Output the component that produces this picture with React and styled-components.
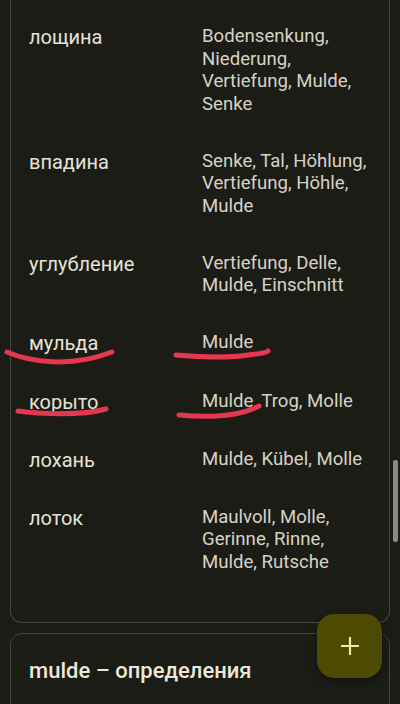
import styled, { createGlobalStyle } from "styled-components"

const GlobalStyle = createGlobalStyle`
  html, body {
    margin: 0;
    padding: 0;
    background: #1c1c17;
  }
  body {
    font-family: Roboto, "Noto Sans", sans-serif;
  }
`

const Screen = styled.div`
  position: relative;
  width: 400px;
  height: 704px;
  overflow: hidden;
  background: #1c1c17;
  padding: 0 10px;
  box-sizing: border-box;
`

const TranslationsCard = styled.div`
  border: 1px solid #46463a;
  border-top: none;
  border-radius: 0 0 12px 12px;
  padding: 8px 0 31px;
`

const Row = styled.div`
  display: grid;
  grid-template-columns: 173px 1fr;
  padding: 17.4px 0 17.4px 18px;
  align-items: start;
`

const Word = styled.div`
  color: #e6e3d6;
  font-size: 20px;
  line-height: 22.4px;
  padding-top: 1px;
`

const Synonyms = styled.div`
  color: #d6d3c4;
  font-size: 18.6px;
  line-height: 22.4px;
  padding-right: 8px;
`

const DefinitionsCard = styled.div`
  margin-top: 10px;
  border: 1px solid #46463a;
  border-radius: 12px;
  height: 120px;
  padding: 24px 18px;
  box-sizing: border-box;
`

const DefinitionsTitle = styled.div`
  color: #ebe8da;
  font-size: 22px;
  font-weight: 500;
`

const Fab = styled.button`
  position: absolute;
  right: 18px;
  top: 614px;
  width: 65px;
  height: 64px;
  border: none;
  border-radius: 17px;
  background: #4c4a03;
  box-shadow: 0 3px 6px rgba(0, 0, 0, 0.45);
  display: flex;
  align-items: center;
  justify-content: center;
  padding: 0;
`

const Scrollbar = styled.div`
  position: absolute;
  right: 2px;
  top: 460px;
  width: 5px;
  height: 82px;
  border-radius: 2px;
  background: #8a8a7e;
`

const Marks = styled.svg`
  position: absolute;
  left: 0;
  top: 0;
  pointer-events: none;
`

const rows = [
  { word: "лощина", syn: "Bodensenkung, Niederung, Vertiefung, Mulde, Senke" },
  { word: "впадина", syn: "Senke, Tal, Höhlung, Vertiefung, Höhle, Mulde" },
  { word: "углубление", syn: "Vertiefung, Delle, Mulde, Einschnitt" },
  { word: "мульда", syn: "Mulde" },
  { word: "корыто", syn: "Mulde, Trog, Molle" },
  { word: "лохань", syn: "Mulde, Kübel, Molle" },
  { word: "лоток", syn: "Maulvoll, Molle, Gerinne, Rinne, Mulde, Rutsche" },
]

export default function App() {
  return (
    <>
      <GlobalStyle />
      <Screen>
        <TranslationsCard>
          {rows.map(r =>
            <Row key={r.word}>
              <Word>{r.word}</Word>
              <Synonyms>{r.syn}</Synonyms>
            </Row>
          )}
        </TranslationsCard>
        <DefinitionsCard>
          <DefinitionsTitle>mulde – определения</DefinitionsTitle>
        </DefinitionsCard>
        <Scrollbar />
        {/* hand-drawn red underlines */}
        <Marks width="400" height="704" viewBox="0 0 400 704">
          <g fill="none" stroke="#e5374f" strokeWidth="5" strokeLinecap="round">
            <path d="M7 352 C 30 362, 70 368, 112 352" />
            <path d="M176 355 C 200 357, 230 358, 248 355 C 258 354, 266 353, 268 351" />
            <path d="M18 411 C 40 414, 80 416, 106 409" />
            <path d="M179 415 C 210 418, 240 416, 259 406" />
          </g>
        </Marks>
        <Fab>
          <svg width="22" height="22" viewBox="0 0 22 22">
            <path d="M11 2 V20 M2 11 H20" stroke="#ebe9a2" strokeWidth="2.2" />
          </svg>
        </Fab>
      </Screen>
    </>
  )
}
